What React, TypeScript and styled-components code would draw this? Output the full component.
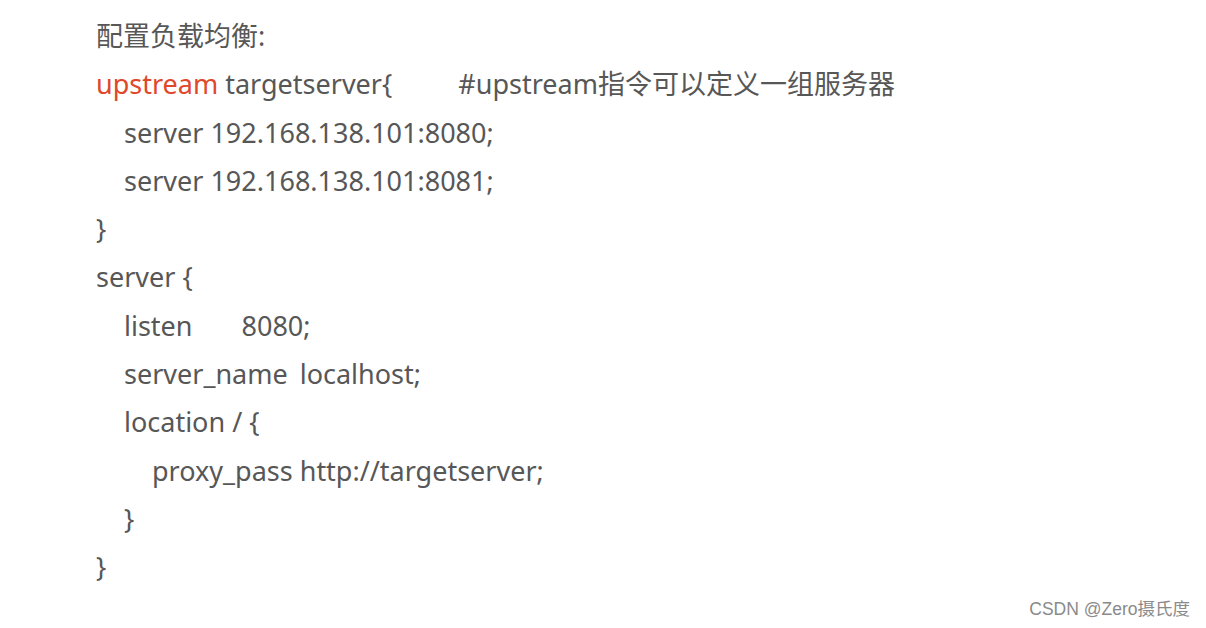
import React from 'react';
import styled, { createGlobalStyle } from 'styled-components';

const GlobalStyle = createGlobalStyle`
    html, body {
        margin: 0;
        padding: 0;
        background: #ffffff;
    }
`;

type Line = {
    indent: number;
    parts: { text: string; red?: boolean; gap?: number }[];
};

const lines: Line[] = [
    { indent: 0, parts: [{ text: '配置负载均衡:' }] },
    {
        indent: 0,
        parts: [
            { text: 'upstream', red: true },
            { text: ' targetserver{' },
            { text: '#upstream指令可以定义一组服务器', gap: 66 },
        ],
    },
    { indent: 1, parts: [{ text: 'server 192.168.138.101:8080;' }] },
    { indent: 1, parts: [{ text: 'server 192.168.138.101:8081;' }] },
    { indent: 0, parts: [{ text: '}' }] },
    { indent: 0, parts: [{ text: 'server {' }] },
    { indent: 1, parts: [{ text: 'listen' }, { text: '8080;', gap: 49 }] },
    { indent: 1, parts: [{ text: 'server_name' }, { text: 'localhost;', gap: 12 }] },
    { indent: 1, parts: [{ text: 'location / {' }] },
    { indent: 2, parts: [{ text: 'proxy_pass http://targetserver;' }] },
    { indent: 1, parts: [{ text: '}' }] },
    { indent: 0, parts: [{ text: '}' }] },
];

const App = () => {
    return (
        <Page>
            <GlobalStyle />
            <Code>
                {lines.map((line, i) => (
                    <Row key={i} indent={line.indent}>
                        {line.parts.map((p, j) => (
                            <Part key={j} red={p.red} gap={p.gap}>
                                {p.text}
                            </Part>
                        ))}
                    </Row>
                ))}
            </Code>
            <Watermark>CSDN @Zero摄氏度</Watermark>
        </Page>
    );
};

export default App;

const Page = styled.div`
    position: relative;
    width: 1206px;
    height: 628px;
    background: #ffffff;
    overflow: hidden;
`;

const Code = styled.div`
    display: flex;
    flex-direction: column;
    padding: 12px 0 0 96px;
    font-family: 'Noto Sans', 'Noto Sans CJK SC', sans-serif;
    font-size: 27px;
    color: #575757;
`;

const Row = styled.div<{ indent: number }>`
    display: flex;
    align-items: baseline;
    height: 48.3px;
    line-height: 48.3px;
    padding-left: ${({ indent }) => indent * 28}px;
    white-space: pre;
`;

const Part = styled.span<{ red?: boolean; gap?: number }>`
    color: ${({ red }) => (red ? '#e0482b' : 'inherit')};
    margin-left: ${({ gap }) => gap ?? 0}px;
`;

const Watermark = styled.div`
    position: absolute;
    right: 16px;
    bottom: 8px;
    font-family: 'Liberation Sans', 'Noto Sans CJK SC', sans-serif;
    font-size: 17.5px;
    color: #8a8a8a;
`;
